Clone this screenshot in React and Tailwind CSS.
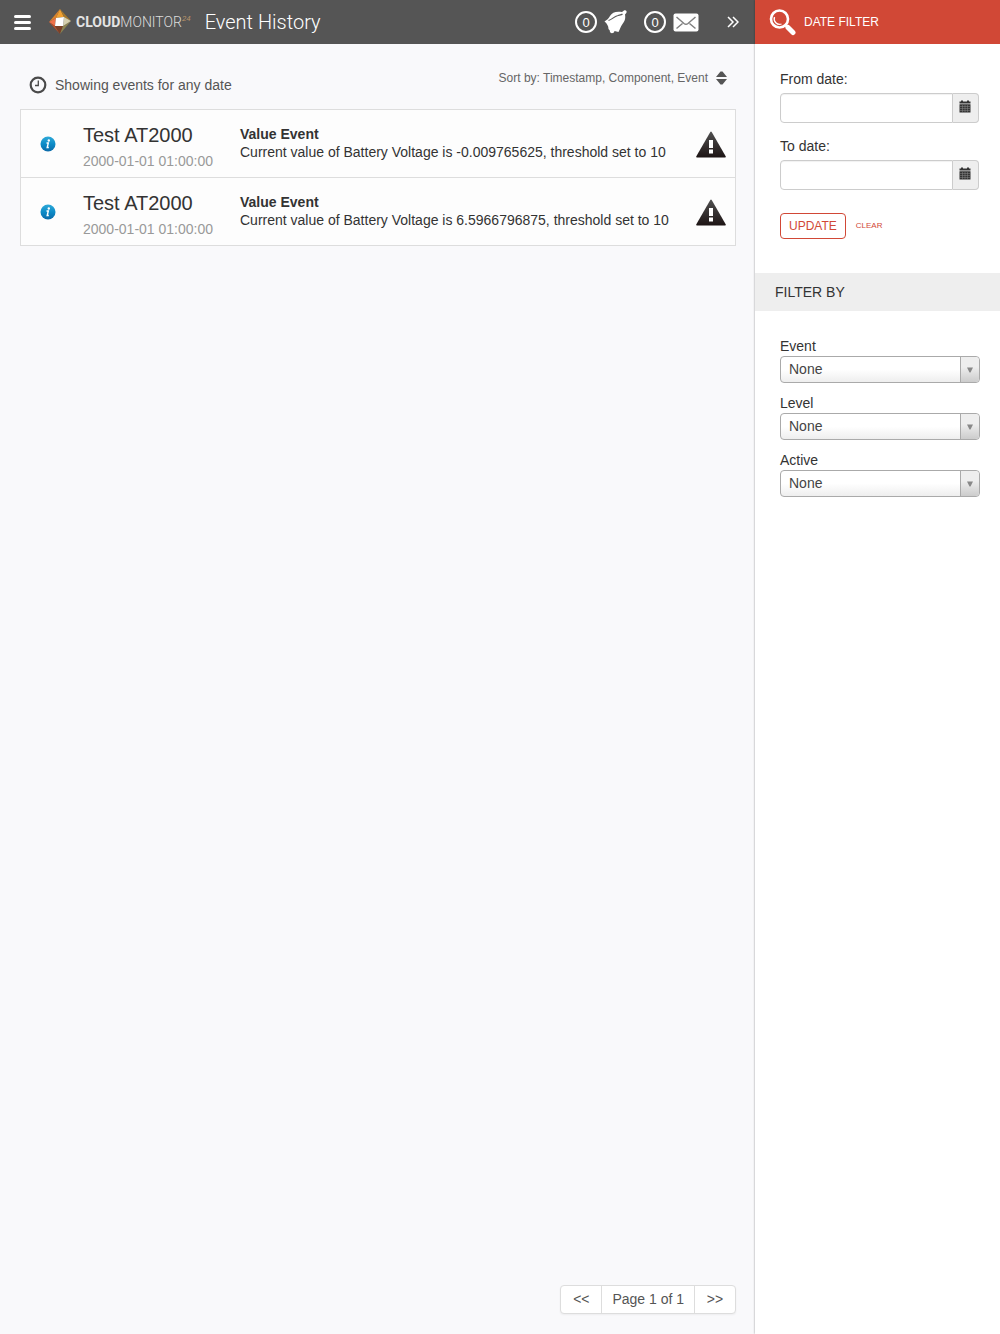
import React from "react";

const events = [
  {
    id: 1,
    component: "Test AT2000",
    time: "2000-01-01 01:00:00",
    title: "Value Event",
    text: "Current value of Battery Voltage is -0.009765625, threshold set to 10",
  },
  {
    id: 2,
    component: "Test AT2000",
    time: "2000-01-01 01:00:00",
    title: "Value Event",
    text: "Current value of Battery Voltage is 6.5966796875, threshold set to 10",
  },
];

function LogoMark() {
  return (
    <svg width="24" height="26" viewBox="0 0 24 26" aria-hidden="true">
      <path d="M12 0 1 13 8 9Z" fill="#d9822b" />
      <path d="M12 0 8 9 16 8Z" fill="#f0a030" />
      <path d="M12 0 16 8 23 12Z" fill="#a8792c" />
      <path d="M1 13 8 9 7 17Z" fill="#ee7048" />
      <path d="M1 13 7 17 12 25Z" fill="#b9502c" />
      <path d="M7 17 12 25 15 17Z" fill="#7d4026" />
      <path d="M15 17 12 25 23 12Z" fill="#8c8452" />
      <path d="M16 8 23 12 15 17Z" fill="#d5cfae" />
      <path d="M8 9 16 8 15 17 7 17Z" fill="#fff" />
    </svg>
  );
}

function Bell() {
  return (
    <svg width="24" height="26" viewBox="0 0 24 26" aria-hidden="true">
      <path
        d="M0.500 12.500C3 11 4.500 9.500 6 7C8 3.500 12 2 18 3L20 1.500C21.500 0.500 23.500 2 22.300 4L21 5.500C21.800 10 20.500 12.500 18.500 15C16.500 18 16 20 14.500 23L10.500 22C10 25 5.500 25 5.800 21.500L4.500 20C4.500 17 3 14.500 0.500 12.500Z"
        fill="#fff"
      />
      <path d="M4.500 11.500C8.500 10.500 9.500 7.500 14 6.500C16 6 17.500 6 18.500 5" fill="none" stroke="#5c5c5c" strokeWidth="1.200" />
    </svg>
  );
}

function Envelope() {
  return (
    <svg width="26" height="19" viewBox="0 0 26 19" aria-hidden="true">
      <rect x="0.500" y="0.500" width="25" height="18" rx="2" fill="#fff" />
      <path d="M3.500 4 11 10.500Q13 12 15 10.500L22.500 4M3.500 15.500 9.500 10.500M22.500 15.500 16.500 10.500" fill="none" stroke="#808080" strokeWidth="1.500" />
    </svg>
  );
}

function Magnifier() {
  return (
    <svg width="27" height="27" viewBox="0 0 27 27" aria-hidden="true">
      <circle cx="10.500" cy="10" r="8.500" fill="none" stroke="#fff" strokeWidth="2.600" />
      <path d="M5.500 8A5.500 5.500 0 0 0 12.500 15" fill="none" stroke="#fff" strokeWidth="1.300" />
      <path d="M16.500 16 18.500 18" stroke="#fff" strokeWidth="3" />
      <path d="M19 18.500 24 23.500" stroke="#fff" strokeWidth="5" strokeLinecap="round" />
    </svg>
  );
}

function Clock() {
  return (
    <svg width="18" height="18" viewBox="0 0 18 18" aria-hidden="true">
      <circle cx="9" cy="9" r="7.300" fill="none" stroke="#4a4a4a" strokeWidth="2.200" />
      <path d="M9.300 4.500V9.500H6" fill="none" stroke="#4a4a4a" strokeWidth="1.300" />
    </svg>
  );
}

function Info() {
  return (
    <svg width="16" height="16" viewBox="0 0 16 16" aria-hidden="true">
      <defs>
        <linearGradient id="info" x1="0" y1="0" x2="0" y2="1">
          <stop offset="0" stopColor="#2fa9d8" />
          <stop offset="0.500" stopColor="#0d8cc8" />
          <stop offset="1" stopColor="#0b6aa8" />
        </linearGradient>
      </defs>
      <circle cx="8" cy="8" r="7.500" fill="url(#info)" />
      <circle cx="8.800" cy="4.500" r="1.200" fill="#fff" />
      <path d="M6.500 7H8.300L7.200 11.500H8.800" fill="none" stroke="#fff" strokeWidth="1.400" />
    </svg>
  );
}

function Warning() {
  return (
    <svg width="30" height="27" viewBox="0 0 30 27" aria-hidden="true">
      <defs>
        <linearGradient id="warning" x1="0" y1="0" x2="0" y2="1">
          <stop offset="0" stopColor="#505050" />
          <stop offset="1" stopColor="#1d1414" />
        </linearGradient>
      </defs>
      <path d="M14.300 1Q15 0 15.700 1L29.800 25.500Q30 26.500 29 26.500H1Q0 26.500 0.200 25.500Z" fill="url(#warning)" />
      <path d="M13 9H17V17H13ZM13 18.500H17V22.500H13Z" fill="#fff" />
    </svg>
  );
}

function Calendar() {
  return (
    <svg width="12" height="13" viewBox="0 0 12 13" aria-hidden="true">
      <path d="M0.500 1.500H11.500V3.500H0.500ZM2 0.500H4V2H2ZM8 0.500H10V2H8ZM0.500 4.200H11.500V12.500H0.500Z" fill="#333" />
      <path d="M1 6.500H11M1 8.500H11M1 10.500H11M3.500 5V12M6 5V12M8.500 5V12" stroke="#888" strokeWidth="0.500" />
    </svg>
  );
}

function Counter({ label, children }) {
  return (
    <button type="button" aria-label={label} className="flex items-center gap-[7px]">
      <span className="flex size-[22px] items-center justify-center rounded-full border-2 border-white text-[13px] leading-none">
        0
      </span>
      {children}
    </button>
  );
}

function DateField({ id, label }) {
  return (
    <div>
      <label htmlFor={id} className="block leading-5">{label}</label>
      <div className="mt-1 flex h-[30px]">
        <input
          id={id}
          type="text"
          className="min-w-0 flex-1 rounded-l border border-[#ccc] bg-white px-2 shadow-[inset_0_1px_1px_rgba(0,0,0,0.06)] outline-none"
        />
        <button
          type="button"
          aria-label={"Pick " + label}
          className="flex w-[26px] items-start justify-center rounded-r border border-l-0 border-[#ccc] bg-[#eee] pt-1.5 pr-0.5"
        >
          <Calendar />
        </button>
      </div>
    </div>
  );
}

function SelectField({ id, label }) {
  return (
    <div>
      <label htmlFor={id} className="block leading-5">{label}</label>
      <div className="relative">
        <select
          id={id}
          defaultValue="None"
          className="block h-[27px] w-full appearance-none rounded border border-[#aaa] bg-linear-to-t from-[#eee] to-white to-50% px-2 text-[#444] outline-none"
        >
          <option>None</option>
        </select>
        <span className="pointer-events-none absolute inset-y-px right-px flex w-[19px] items-center justify-center rounded-r border-l border-[#aaa] bg-linear-to-t from-[#ccc] to-[#eee] to-60%">
          <svg width="6" height="6" viewBox="0 0 6 6" aria-hidden="true">
            <path d="M0 0.500H6L3.500 5.500H2.500Z" fill="#888" />
          </svg>
        </span>
      </div>
    </div>
  );
}

export default function App() {
  return (
    <div className="flex min-h-screen bg-[#f9f9fb] font-['Liberation_Sans',Arial,sans-serif] text-[14px] text-[#333]">
      <main className="flex min-w-0 flex-1 flex-col">
        <header className="flex h-11 items-center bg-[#555] pr-4 pl-3.5 text-white">
          <button type="button" aria-label="Menu" className="flex w-[17px] flex-col gap-[3px]">
            <span className="h-[3px] rounded-xs bg-white" />
            <span className="h-[3px] rounded-xs bg-white" />
            <span className="h-[3px] rounded-xs bg-white" />
          </button>
          <a href="#home" className="ml-[17px] flex items-center gap-1 font-[Roboto,sans-serif] text-[14px] leading-none text-[#e4e4e4]">
            <LogoMark />
            <span className="flex">
              <b>CLOUD</b>
              <span className="font-light text-[#dcdcdc]">MONITOR</span>
              <i className="text-[8px] leading-none text-[#b8936a]">24</i>
            </span>
          </a>
          <h1 className="ml-[14px] font-[Roboto,sans-serif] text-[20px] font-light">Event History</h1>
          <div className="ml-auto flex items-center gap-4">
            <Counter label="Alarms"><Bell /></Counter>
            <Counter label="Messages"><Envelope /></Counter>
          </div>
          <button type="button" aria-label="Collapse filters" className="ml-7">
            <svg width="12" height="12" viewBox="0 0 12 12" aria-hidden="true">
              <path d="M1 1 6 6 1 11M6 1 11 6 6 11" fill="none" stroke="#fff" strokeWidth="1.500" />
            </svg>
          </button>
        </header>

        <div className="flex flex-1 flex-col pr-[19px] pb-5 pl-5">
          <div className="flex h-16 items-start justify-between px-[9px] text-[#555]">
            <p className="mt-[31px] flex items-center gap-2 leading-5">
              <Clock />
              Showing events for any date
            </p>
            <button type="button" className="mt-6 flex items-center gap-2 text-[12px] leading-5 text-[#666]">
              Sort by: Timestamp, Component, Event
              <svg width="11" height="14" viewBox="0 0 11 14" aria-hidden="true">
                <path d="M0 6 4.500 0.500H6.500L11 6ZM0 8H11L6.500 13.500H4.500Z" fill="#555" />
              </svg>
            </button>
          </div>

          <ul className="mt-px divide-y divide-[#ddd] border border-[#ddd] bg-[#fdfdfd]">
            {events.map((event) => (
              <li key={event.id} className="box-content flex h-[67px] items-center pr-[9px] pl-[19px]">
                <Info />
                <div className="ml-[27px] w-[157px] pt-1.5">
                  <h2 className="text-[20px] leading-6">{event.component}</h2>
                  <time className="block pt-1 leading-5 text-[#999]">{event.time}</time>
                </div>
                <div className="min-w-0 flex-1 pb-px leading-[18px]">
                  <h3 className="font-bold">{event.title}</h3>
                  <p>{event.text}</p>
                </div>
                <div className="pt-0.5"><Warning /></div>
              </li>
            ))}
          </ul>

          <nav aria-label="Pages" className="mt-auto flex h-[29px] self-end rounded border border-[#ddd] bg-white text-[#555] shadow-xs">
            <button type="button" className="w-10">&lt;&lt;</button>
            <span className="flex items-center border-x border-[#ddd] px-2.5">Page 1 of 1</span>
            <button type="button" className="w-10">&gt;&gt;</button>
          </nav>
        </div>
      </main>

      <aside className="w-[245px] shrink-0 bg-white shadow-[0_0_2px_rgba(0,0,0,0.4)]">
        <h2 className="flex h-11 items-center gap-2 bg-[#d14836] pl-3.5 text-[12px] text-white">
          <Magnifier />
          DATE FILTER
        </h2>
        <form className="pt-[25px] pr-[21px] pl-[25px]" onSubmit={(e) => e.preventDefault()}>
          <div className="flex flex-col gap-[13px]">
            <DateField id="from" label="From date:" />
            <DateField id="to" label="To date:" />
          </div>
          <div className="mt-[23px] flex items-center gap-2.5 text-[#d14836]">
            <button type="submit" className="h-[26px] rounded border border-[#d14836] px-2 text-[12px]">UPDATE</button>
            <button type="reset" className="text-[8px]">CLEAR</button>
          </div>
        </form>
        <h2 className="mt-[34px] flex h-[38px] items-center bg-[#eee] pl-5">FILTER BY</h2>
        <div className="flex flex-col gap-2.5 pt-[25px] pr-5 pl-[25px]">
          <SelectField id="event" label="Event" />
          <SelectField id="level" label="Level" />
          <SelectField id="active" label="Active" />
        </div>
      </aside>
    </div>
  );
}
